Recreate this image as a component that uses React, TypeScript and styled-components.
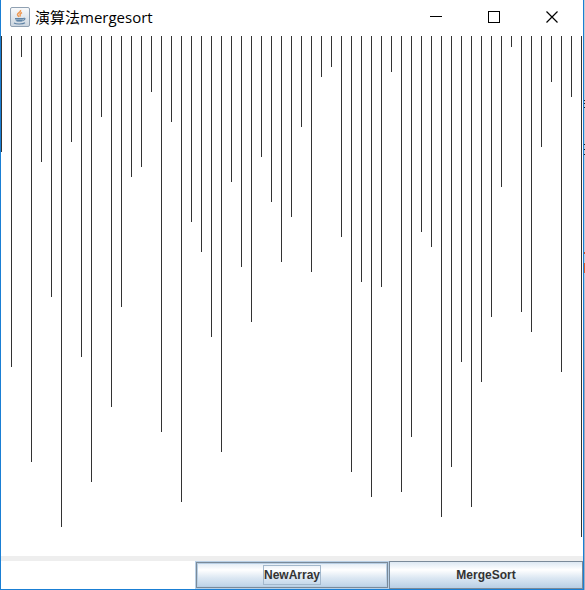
import React from "react";
import styled, { createGlobalStyle } from "styled-components";

const GlobalStyle = createGlobalStyle`
  * { box-sizing: border-box; }
  html, body { margin: 0; }
  body { background: #b4bed0; }
`;

const Desktop = styled.div`
  display: flex;
  flex-direction: column;
  min-height: 100vh;
  padding-right: 1px;
  background:
    linear-gradient(#222, #222) 100% 100px / 1px 1px no-repeat,
    linear-gradient(#222, #222) 100% 103px / 1px 1px no-repeat,
    linear-gradient(#222, #222) 100% 107px / 1px 1px no-repeat,
    linear-gradient(#222, #222) 100% 144px / 1px 1px no-repeat,
    linear-gradient(#222, #222) 100% 149px / 1px 1px no-repeat,
    linear-gradient(#222, #222) 100% 154px / 1px 1px no-repeat,
    linear-gradient(#c4532c, #c4532c) 100% 252px / 1px 2px no-repeat,
    linear-gradient(#d95f30, #d95f30) 100% 263px / 1px 10px no-repeat,
    linear-gradient(#c9cdd4, #b9cde2 45%, #9aa3ba 65%, #a9adc0);
`;

const Window = styled.main`
  flex: 1;
  display: flex;
  flex-direction: column;
  background: #fff;
  border: 1px solid #1a7fd4;
  border-top: 0;
`;

const TitleBar = styled.header`
  display: flex;
  align-items: center;
  height: 34px;
  margin-bottom: 2px;
  padding: 0 2px 0 9px;
`;

const Title = styled.h1`
  flex: 1;
  margin: 0 0 0 5px;
  font: 400 15px/20px "Open Sans", "Noto Sans CJK TC", sans-serif;
  color: #000;
  white-space: nowrap;
`;

const Controls = styled.div`
  display: flex;
  align-self: stretch;
`;

const ControlButton = styled.button`
  display: flex;
  align-items: center;
  justify-content: center;
  width: 58px;
  padding: 0;
  border: 0;
  background: transparent;
  color: #000;
`;

const Chart = styled.section`
  flex: 1;
  display: flex;
  align-items: flex-start;
  justify-content: space-between;
  min-height: 520px;
  padding-right: 1px;
`;

const Bar = styled.span`
  width: 1px;
  background: #333;
`;

const Footer = styled.footer`
  display: grid;
  grid-template-columns: repeat(3, 1fr);
  border-top: 5px solid #eee;
`;

const ActionButton = styled.button<{ $focused?: boolean }>`
  grid-column: ${(p) => (p.$focused ? 2 : 3)};
  display: flex;
  align-items: center;
  justify-content: center;
  height: 28px;
  padding: 0;
  border: 1px solid ${(p) => (p.$focused ? "#b8cfe5" : "#7a8a99")};
  box-shadow: ${(p) =>
    p.$focused ? "inset 0 0 0 1px #7a8a99, inset 0 0 0 2px #b8cfe5" : "none"};
  background: linear-gradient(#dde8f3, #fff 30%, #dde8f3 60%, #b8cfe5);
  font: 700 12px/18px "Liberation Sans", Arial, sans-serif;
  color: #333;
`;

const Label = styled.span<{ $focused?: boolean }>`
  border: 1px solid ${(p) => (p.$focused ? "#a3b8cc" : "transparent")};
`;

const values = [
  115, 330, 20, 425, 125, 260, 490, 105, 320, 445, 80, 370, 270, 140, 130, 55, 395, 85, 465, 185,
  215, 300, 415, 145, 230, 285, 120, 165, 225, 180, 90, 235, 40, 30, 200, 435, 245, 460, 250, 35,
  455, 400, 195, 210, 480, 430, 325, 470, 345, 280, 150, 10, 275, 295, 110, 45, 335, 60, 500,
];

function JavaIcon() {
  return (
    <svg width="20" height="20" viewBox="0 0 20 20" fill="none" aria-hidden="true">
      <defs>
        <linearGradient id="tile" x1="0" y1="0" x2="0" y2="1">
          <stop offset="0" stopColor="#fafbfc" />
          <stop offset="1" stopColor="#cbd5df" />
        </linearGradient>
      </defs>
      <rect x="0.5" y="0.5" width="19" height="19" rx="1.5" fill="url(#tile)" stroke="#8fa0b2" />
      <path d="M10.5 3c1 2-3 2.800-3 4.500 0 1 1 1.500 1.500 2.500M12 5.500c-2 1-2.500 2-1.500 4" stroke="#ee9a56" strokeWidth="1.500" />
      <path d="M5 11h8.500c0 2-1 3.500-2 4H7.500C6 14.500 5 13 5 11z" fill="#89a5bf" />
      <path d="M5 11.500h8M6.500 13.500h5.500M13 11.500c3-1 2.500 1.500-.5 2.200M4 16c2 1.300 9 1.300 11-.3" stroke="#5f83a5" strokeWidth="1.100" />
    </svg>
  );
}

export default function App() {
  return (
    <>
      <GlobalStyle />
      <Desktop>
        <Window>
          <TitleBar>
            <JavaIcon />
            <Title>演算法mergesort</Title>
            <Controls>
              <ControlButton aria-label="Minimize">
                <svg width="12" height="12" shapeRendering="crispEdges">
                  <path d="M0 5h12v1H0z" fill="currentColor" />
                </svg>
              </ControlButton>
              <ControlButton aria-label="Maximize">
                <svg width="12" height="12" shapeRendering="crispEdges">
                  <rect x="0.5" y="0.5" width="11" height="11" fill="none" stroke="currentColor" />
                </svg>
              </ControlButton>
              <ControlButton aria-label="Close">
                <svg width="12" height="12">
                  <path d="M0.500 0.500l11 11M11.500 0.500l-11 11" stroke="currentColor" strokeWidth="1.200" />
                </svg>
              </ControlButton>
            </Controls>
          </TitleBar>
          <Chart aria-label="Array values">
            {values.map((value) => (
              <Bar key={value} style={{ height: value + 1 }} />
            ))}
          </Chart>
          <Footer>
            <ActionButton $focused>
              <Label $focused>NewArray</Label>
            </ActionButton>
            <ActionButton>
              <Label>MergeSort</Label>
            </ActionButton>
          </Footer>
        </Window>
      </Desktop>
    </>
  );
}
